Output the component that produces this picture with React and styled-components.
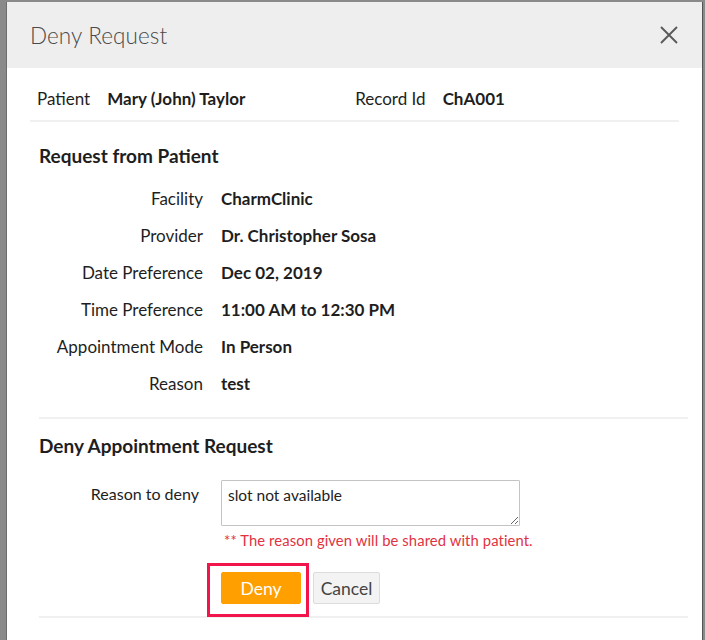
import React, { useState } from 'react';
import styled, { createGlobalStyle } from 'styled-components';

const GlobalStyle = createGlobalStyle`
	html, body {
		margin: 0;
		padding: 0;
		background: #8a8a8a;
		font-family: Lato, 'Open Sans', sans-serif;
	}
	* {
		box-sizing: border-box;
	}
`;

const Page = styled.div`
	width: 705px;
	height: 640px;
	overflow: hidden;
	padding: 2px 3px 0 7px;
	background: #8a8a8a;
`;

const Modal = styled.div`
	width: 695px;
	height: 660px;
	background: #fff;
	box-shadow: -1px 0 0 #6d6d6d, 1px 0 0 #555;
`;

const Header = styled.div`
	height: 66px;
	background: #eeeeee;
	display: flex;
	align-items: center;
	justify-content: space-between;
	padding: 0 24px 0 23px;
`;

const Title = styled.h2`
	margin: 0;
	font-size: 22.5px;
	font-weight: 300;
	color: #4a4a4a;
	letter-spacing: 0.1px;
`;

const CloseButton = styled.button`
	border: none;
	background: none;
	padding: 0;
	width: 18px;
	height: 18px;
	cursor: pointer;
	display: flex;
	align-items: center;
	justify-content: center;
`;

const PatientBar = styled.div`
	margin: 0 23px;
	height: 54px;
	display: flex;
	align-items: center;
	padding: 9px 0 0 7px;
	border-bottom: 2px solid #f0f0f0;
	font-size: 17px;
	color: #1e1e1e;
`;

const InfoLabel = styled.span`
	margin-right: 17px;
`;

const InfoValue = styled.span`
	font-weight: 700;
	width: ${(p) => p.width || 'auto'};
`;

const Section = styled.div`
	margin: 0 14px 0 32px;
	padding: ${(p) => p.pad || '0'};
	border-bottom: 2px solid #f0f0f0;
`;

const SectionTitle = styled.h3`
	margin: 0;
	font-size: 19px;
	font-weight: 700;
	color: #1e1e1e;
	line-height: 22px;
`;

const DetailGrid = styled.div`
	display: grid;
	grid-template-columns: 164px 1fr;
	column-gap: 18px;
	row-gap: 15px;
	margin-top: ${(p) => p.top || '21px'};
	font-size: 17px;
	line-height: 22px;
	color: #1e1e1e;
`;

const Label = styled.div`
	text-align: right;
	font-size: ${(p) => p.size || '17px'};
	padding-top: ${(p) => p.top || '0'};
	padding-right: ${(p) => p.right || '0'};
`;

const Value = styled.div`
	font-weight: 700;
`;

const FieldCol = styled.div`
	display: flex;
	flex-direction: column;
	align-items: flex-start;
`;

const TextArea = styled.textarea`
	width: 299px;
	height: 46px;
	border: 1px solid #c4c4c4;
	border-radius: 1px;
	padding: 5px 6px;
	font-family: Lato, sans-serif;
	font-size: 15.5px;
	color: #222;
	resize: vertical;
	outline: none;
`;

const Hint = styled.div`
	margin: 5px 0 0 3px;
	font-size: 14.8px;
	line-height: 18px;
	color: #e2323f;
	letter-spacing: 0.1px;
`;

const Buttons = styled.div`
	display: flex;
	gap: 12px;
	margin-top: 23px;
	margin-bottom: 12px;
`;

const Highlight = styled.div`
	position: relative;

	&::after {
		content: '';
		position: absolute;
		left: -14px;
		top: -9px;
		right: -8px;
		bottom: -13px;
		border: 3px solid #f2154c;
		pointer-events: none;
	}
`;

const Button = styled.button`
	height: 32px;
	padding: 0;
	width: ${(p) => (p.primary ? '80px' : '67px')};
	border-radius: 2px;
	font-family: Lato, sans-serif;
	font-size: 17.5px;
	cursor: pointer;
	background: ${(p) => (p.primary ? '#ffa000' : '#f3f3f3')};
	color: ${(p) => (p.primary ? '#fff' : '#444')};
	border: 1px solid ${(p) => (p.primary ? '#ffa000' : '#dcdcdc')};
`;

const details = [
	['Facility', 'CharmClinic'],
	['Provider', 'Dr. Christopher Sosa'],
	['Date Preference', 'Dec 02, 2019'],
	['Time Preference', '11:00 AM to 12:30 PM'],
	['Appointment Mode', 'In Person'],
	['Reason', 'test'],
];

function App() {
	const [reason, setReason] = useState('slot not available');

	return (
		<Page>
			<GlobalStyle />
			<Modal>
				<Header>
					<Title>Deny Request</Title>
					<CloseButton aria-label='Close'>
						<svg width='18' height='18' viewBox='0 0 18 18'>
							<path
								d='M1 1 L17 17 M17 1 L1 17'
								stroke='#595959'
								strokeWidth='1.9'
								fill='none'
							/>
						</svg>
					</CloseButton>
				</Header>

				<PatientBar>
					<InfoLabel>Patient</InfoLabel>
					<InfoValue width='248px'>Mary (John) Taylor</InfoValue>
					<InfoLabel>Record Id</InfoLabel>
					<InfoValue>ChA001</InfoValue>
				</PatientBar>

				<Section pad='23px 0 22px'>
					<SectionTitle>Request from Patient</SectionTitle>
					<DetailGrid>
						{details.map(([label, value]) => (
							<React.Fragment key={label}>
								<Label>{label}</Label>
								<Value>{value}</Value>
							</React.Fragment>
						))}
					</DetailGrid>
				</Section>

				<Section pad='16px 0 0'>
					<SectionTitle>Deny Appointment Request</SectionTitle>
					<DetailGrid top='23px'>
						<Label size='16px' top='3px' right='4px'>
							Reason to deny
						</Label>
						<FieldCol>
							<TextArea
								value={reason}
								onChange={(e) => setReason(e.target.value)}
							/>
							<Hint>** The reason given will be shared with patient.</Hint>
							<Buttons>
								<Highlight>
									<Button primary>Deny</Button>
								</Highlight>
								<Button>Cancel</Button>
							</Buttons>
						</FieldCol>
					</DetailGrid>
				</Section>
			</Modal>
		</Page>
	);
}

export default App;
